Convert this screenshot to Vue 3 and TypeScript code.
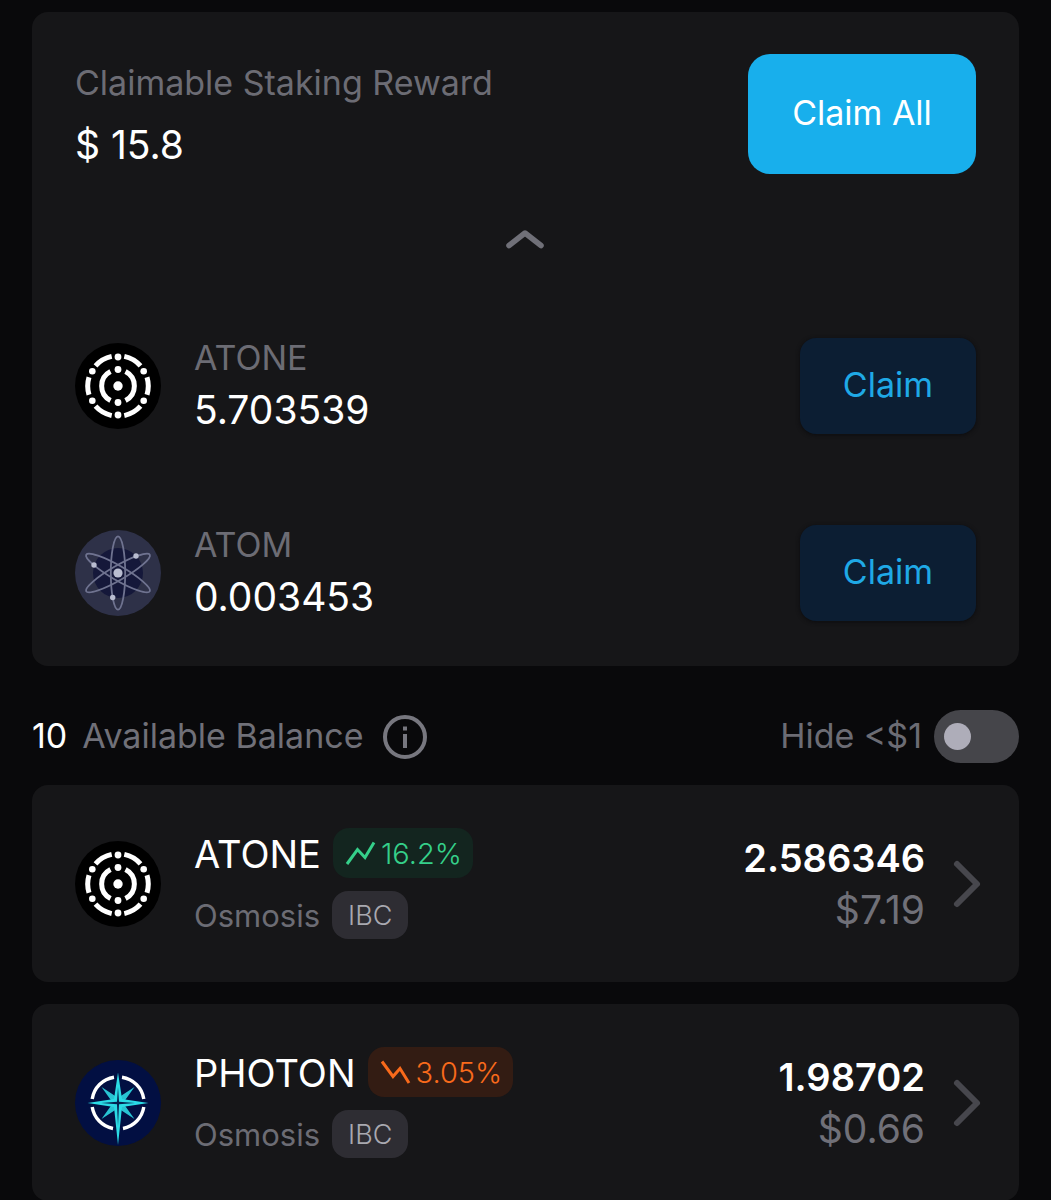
<script setup lang="ts">
import { ref } from 'vue'

type Token = 'atone' | 'atom' | 'photon'

interface Reward {
  token: Token
  name: string
  amount: string
}

interface Asset {
  token: Token
  name: string
  change: string
  rising: boolean
  chain: string
  amount: string
  value: string
}

const rewards: Reward[] = [
  { token: 'atone', name: 'ATONE', amount: '5.703539' },
  { token: 'atom', name: 'ATOM', amount: '0.003453' },
]

const assets: Asset[] = [
  { token: 'atone', name: 'ATONE', change: '16.2%', rising: true, chain: 'Osmosis', amount: '2.586346', value: '$7.19' },
  { token: 'photon', name: 'PHOTON', change: '3.05%', rising: false, chain: 'Osmosis', amount: '1.98702', value: '$0.66' },
]

const expanded = ref(true)
const hideSmall = ref(false)
</script>

<template>
  <svg class="defs" width="0" height="0" aria-hidden="true">
    <symbol id="token-atone" viewBox="0 0 86 86">
      <circle cx="43" cy="43" r="43" fill="#000" />
      <g fill="none" stroke="#fff" stroke-width="5">
        <path d="M20.500 22.800A30.300 30.300 0 0 1 36.700 13.400M49.300 13.400A30.300 30.300 0 0 1 65.500 22.800M72 34.300A30.300 30.300 0 0 1 72 51.700M65.500 63.200A30.300 30.300 0 0 1 49.300 72.600M36.700 72.600A30.300 30.300 0 0 1 20.500 63.200M14 51.700A30.300 30.300 0 0 1 14 34.300" />
        <path d="M35.500 28.500A16.300 16.300 0 0 0 35.500 57.500M50.500 28.500A16.300 16.300 0 0 1 50.500 57.500" />
      </g>
      <g fill="#fff">
        <circle cx="43" cy="43" r="4.700" />
        <circle cx="43" cy="26.500" r="3.400" />
        <circle cx="43" cy="59.500" r="3.400" />
        <circle cx="43" cy="14" r="3.400" />
        <circle cx="43" cy="72" r="3.400" />
        <circle cx="17.300" cy="28.300" r="3.300" />
        <circle cx="68.700" cy="28.300" r="3.300" />
        <circle cx="17.300" cy="57.700" r="3.300" />
        <circle cx="68.700" cy="57.700" r="3.300" />
      </g>
    </symbol>
    <symbol id="token-atom" viewBox="0 0 86 86">
      <circle cx="43" cy="43" r="43" fill="#2e3148" />
      <circle cx="43" cy="43" r="25" fill="#15183a" />
      <g fill="none" stroke="#6f7390" stroke-width="1.800">
        <ellipse cx="43" cy="43" rx="7.200" ry="36.700" />
        <ellipse cx="43" cy="43" rx="7.200" ry="36.700" transform="rotate(60 43 43)" />
        <ellipse cx="43" cy="43" rx="7.200" ry="36.700" transform="rotate(120 43 43)" />
      </g>
      <g fill="#b9bdd0">
        <circle cx="43" cy="43" r="4.600" />
        <circle cx="61" cy="26" r="2.700" />
        <circle cx="19" cy="35" r="2.700" />
        <circle cx="37.700" cy="67.500" r="2.700" />
      </g>
    </symbol>
    <symbol id="token-photon" viewBox="0 0 86 86">
      <circle cx="43" cy="43" r="43" fill="#020f42" />
      <path d="M17.200 39A26 26 0 0 1 39 17.200M47 17.200A26 26 0 0 1 68.800 39M68.800 47A26 26 0 0 1 48 68.500M38 68.500A26 26 0 0 1 17.200 47" fill="none" stroke="#fff" stroke-width="3.400" />
      <path d="M26.500 27L41 36.500L43 38L45 36.500L59.500 27L49.500 41L48 43L49.500 45L59.500 59L45 49.500L43 48L41 49.500L26.500 59L36.500 45L38 43L36.500 41Z" fill="#28c3d3" />
      <path d="M43 12.500L47 39L73.500 43L47 47L43 85L39 47L12.500 43L39 39Z" fill="#2bdbe6" />
      <path d="M43 27L44 41.800L60 43L44 44.200L43 66L42 44.200L26 43L42 41.800Z" fill="#04204f" />
    </symbol>
  </svg>

  <main class="page">
    <section class="card rewards">
      <header class="summary">
        <div>
          <h2 class="label">Claimable Staking Reward</h2>
          <p class="amount">$ 15.8</p>
        </div>
        <button type="button" class="claim-all">Claim All</button>
      </header>
      <button type="button" class="collapse" aria-label="Toggle rewards" :aria-expanded="expanded" @click="expanded = !expanded">
        <svg width="40" height="22" viewBox="0 0 40 22" :class="{ flipped: !expanded }">
          <path d="M3 17.500L19 5L35 17.500" fill="none" stroke="#707078" stroke-width="5.500" stroke-linecap="round" stroke-linejoin="round" />
        </svg>
      </button>
      <ul v-if="expanded" class="reward-list">
        <li v-for="reward in rewards" :key="reward.token" class="row">
          <svg class="token" aria-hidden="true"><use :href="`#token-${reward.token}`" /></svg>
          <div class="grow">
            <h3 class="label">{{ reward.name }}</h3>
            <p class="amount">{{ reward.amount }}</p>
          </div>
          <button type="button" class="claim">Claim</button>
        </li>
      </ul>
    </section>

    <div class="toolbar">
      <h2 class="title"><span class="count">10</span>Available Balance</h2>
      <button type="button" class="info" aria-label="About available balance">
        <svg width="46" height="46" viewBox="0 0 46 46">
          <circle cx="23" cy="23" r="20" fill="none" stroke="#77777f" stroke-width="4" />
          <path d="M21 12.500h4v4h-4zM21 20h4v14h-4z" fill="#77777f" />
        </svg>
      </button>
      <label class="filter" for="hide-small">Hide &lt;$1</label>
      <input id="hide-small" v-model="hideSmall" type="checkbox" role="switch" class="switch">
    </div>

    <ul class="assets">
      <li v-for="asset in assets" :key="asset.token">
        <a href="#" class="card asset">
          <svg class="token" aria-hidden="true"><use :href="`#token-${asset.token}`" /></svg>
          <div class="grow">
            <div class="line">
              <h3 class="name">{{ asset.name }}</h3>
              <span class="change" :class="asset.rising ? 'up' : 'down'">
                <svg width="32" height="26" viewBox="0 0 32 26" aria-hidden="true">
                  <path :d="asset.rising ? 'M2 24L12.500 9.500L20 17.500L29 2.500' : 'M2 2.500L13 17.500L20 9.500L29 24'" fill="none" stroke="currentColor" stroke-width="3" />
                </svg>
                {{ asset.change }}
              </span>
            </div>
            <div class="line">
              <p class="chain">{{ asset.chain }}</p>
              <span class="tag">IBC</span>
            </div>
          </div>
          <div class="holding">
            <p class="amount strong">{{ asset.amount }}</p>
            <p class="amount value">{{ asset.value }}</p>
          </div>
          <svg class="next" width="32" height="50" viewBox="0 0 32 50" aria-hidden="true">
            <path d="M6 5L26 25L6 45" fill="none" stroke="#47474d" stroke-width="6" stroke-linecap="round" stroke-linejoin="round" />
          </svg>
        </a>
      </li>
    </ul>
  </main>
</template>

<style>
body {
  margin: 0;
  background: #09090b;
}
</style>

<style scoped>
.defs {
  position: absolute;
}

.page {
  box-sizing: border-box;
  padding: 12px 32px 0;
  color: #fff;
  font-family: Inter, "Liberation Sans", sans-serif;
  font-optical-sizing: none;
}

h2,
h3,
p,
ul {
  margin: 0;
  padding: 0;
  font-weight: 400;
}

ul {
  list-style: none;
}

button {
  border: 0;
  padding: 0;
  background: none;
  font-family: inherit;
  cursor: pointer;
}

.card {
  border-radius: 16px;
  background: #161618;
}

.rewards {
  padding: 42px 43px 45px;
}

.summary {
  display: flex;
  justify-content: space-between;
  align-items: flex-start;
}

.summary .label {
  padding-top: 3px;
}

.summary .amount {
  padding-top: 10px;
}

.label {
  color: #6c6c74;
  font-size: 34px;
  line-height: 52px;
}

.amount {
  font-size: 39px;
  line-height: 52px;
}

.claim-all {
  padding: 0 44px 4px;
  min-width: 228px;
  height: 120px;
  border-radius: 22px;
  background: #18afec;
  color: #fff;
  font-size: 34px;
}

.collapse {
  display: block;
  margin: 54px auto 0;
  height: 22px;
}

.collapse svg,
.info svg {
  display: block;
}

.flipped {
  transform: rotate(180deg);
}

.reward-list {
  display: flex;
  flex-direction: column;
  gap: 91px;
  padding-top: 88px;
}

.row {
  display: flex;
  align-items: center;
  height: 96px;
}

.token {
  flex: none;
  width: 86px;
  height: 86px;
}

.grow {
  flex: 1;
  padding-left: 33px;
}

.row .grow {
  padding-bottom: 4px;
}

.claim {
  padding: 0 43px 4px;
  height: 96px;
  border-radius: 16px;
  background: #0c1e33;
  box-shadow: 0 1px 4px #0c0c0e;
  color: #1fa9e6;
  font-size: 34px;
}

.toolbar {
  display: flex;
  align-items: center;
  padding: 44px 0 22px;
  height: 53px;
}

.title,
.filter {
  padding-bottom: 2px;
  color: #707078;
  font-size: 34px;
  line-height: 52px;
}

.count {
  margin-right: 15px;
  color: #fff;
}

.info {
  margin-left: 19px;
}

.filter {
  margin-left: auto;
  color: #6c6c74;
}

.switch {
  appearance: none;
  display: flex;
  align-items: center;
  box-sizing: border-box;
  margin: 0 0 0 12px;
  padding: 0 10px;
  width: 85px;
  height: 53px;
  border-radius: 27px;
  background: #45454a;
  cursor: pointer;
}

.switch::before {
  content: "";
  width: 27px;
  height: 27px;
  border-radius: 50%;
  background: #aeadb9;
}

.switch:checked {
  justify-content: flex-end;
  background: #18afec;
}

.assets {
  display: flex;
  flex-direction: column;
  gap: 22px;
}

.asset {
  display: flex;
  align-items: center;
  padding: 43px 36px 43px 43px;
  color: #fff;
  text-decoration: none;
}

.line {
  display: flex;
  align-items: center;
}

.line + .line {
  margin-top: 13px;
}

.name {
  font-size: 38px;
  line-height: 52px;
  height: 50px;
}

.change,
.tag {
  display: flex;
  align-items: center;
  margin-left: 12px;
  border-radius: 16px;
  font-weight: 300;
}

.change {
  gap: 4px;
  padding: 0 11px 0 12px;
  height: 50px;
  font-size: 29px;
}

.up {
  background: #13251f;
  color: #35d08a;
}

.down {
  background: #331c13;
  color: #f96a1b;
}

.chain {
  color: #6c6c74;
  font-size: 31px;
  line-height: 50px;
  height: 48px;
}

.tag {
  padding: 0 16px;
  height: 48px;
  background: #2e2d33;
  color: #a9a9b0;
  font-size: 27px;
}

.holding {
  text-align: right;
}

.strong {
  font-size: 38px;
  font-weight: 600;
}

.value {
  color: #707078;
}

.next {
  margin-left: 26px;
}
</style>
